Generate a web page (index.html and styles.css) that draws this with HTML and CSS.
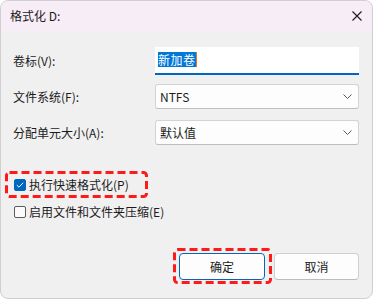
FILE: index.html
```html
<!DOCTYPE html>
<html lang="zh-CN">
<head>
<meta charset="utf-8">
<link rel="stylesheet" href="styles.css">
</head>
<body>
<div class="window">
  <div class="titlebar">
    <span class="title">格式化 D:</span>
    <svg class="close" width="10" height="10" viewBox="0 0 10 10"><path d="M0.5 0.5L9.5 9.5M9.5 0.5L0.5 9.5" stroke="#1a1a1a" stroke-width="1.1" fill="none"/></svg>
  </div>
  <div class="content">
    <div class="row row-1">
      <span class="label">卷标(V):</span>
      <div class="input"><span class="sel">新加卷</span><span class="caret"></span></div>
    </div>
    <div class="row row-2">
      <span class="label">文件系统(F):</span>
      <div class="select"><span>NTFS</span><svg class="chev" width="9" height="5" viewBox="0 0 9 5"><path d="M0.5 0.5L4.5 4.5L8.5 0.5" stroke="#5a5a5a" stroke-width="1" fill="none"/></svg></div>
    </div>
    <div class="row row-3">
      <span class="label">分配单元大小(A):</span>
      <div class="select"><span>默认值</span><svg class="chev" width="9" height="5" viewBox="0 0 9 5"><path d="M0.5 0.5L4.5 4.5L8.5 0.5" stroke="#5a5a5a" stroke-width="1" fill="none"/></svg></div>
    </div>
    <div class="mark-check">
      <svg class="dash" width="143" height="27" viewBox="0 0 143 27"><rect x="1.5" y="1.5" width="140" height="24" rx="3" fill="none" stroke="#ff1a1a" stroke-width="3" stroke-dasharray="8 4"/></svg>
      <div class="check">
        <span class="box checked"><svg width="8" height="6" viewBox="0 0 8 6"><path d="M0.8 3.2L2.9 5.1L7.2 0.8" stroke="#fff" stroke-width="1" fill="none"/></svg></span>
        <span>执行快速格式化(P)</span>
      </div>
    </div>
    <div class="check check-2">
      <span class="box"></span>
      <span>启用文件和文件夹压缩(E)</span>
    </div>
    <div class="buttons">
      <div class="btn-wrap">
        <svg class="dash dash-btn" width="99" height="36" viewBox="0 0 99 36"><rect x="1.5" y="1.5" width="96" height="33" rx="3" fill="none" stroke="#ff1a1a" stroke-width="3" stroke-dasharray="8 4"/></svg>
        <button class="btn primary">确定</button>
      </div>
      <button class="btn">取消</button>
    </div>
  </div>
</div>
</body>
</html>
```
FILE: styles.css
```css
* { box-sizing: border-box; }
html, body { margin: 0; padding: 0; background: #ffffff; }
body {
  font-family: "Noto Sans CJK SC", "Noto Sans", sans-serif;
  font-size: 12px;
  color: #1b1b1b;
}
.window {
  width: 373px;
  height: 299px;
  border: 1px solid #cfcfcf;
  border-radius: 8px;
  background: #f0f0f0;
  overflow: hidden;
}
.titlebar {
  height: 30px;
  background: #f6edf6;
  display: flex;
  align-items: center;
  justify-content: space-between;
  padding: 0 10px 0 9px;
}
.title { font-size: 12px; line-height: 16px; }
.close { display: block; }
.content {
  padding: 16px 12px 0 12px;
}
.row {
  display: flex;
  align-items: center;
}
.label {
  width: 142px;
  line-height: 16px;
}
.row-1 { height: 28px; }
.row-2 { margin-top: 9px; height: 25px; }
.row-3 { margin-top: 11px; height: 25px; }
.input {
  width: 204px;
  height: 28px;
  background: #ffffff;
  border-bottom: 2px solid #0067c0;
  display: flex;
  align-items: center;
  padding-left: 3px;
  padding-bottom: 2px;
}
.sel {
  background: #0078d7;
  color: #ffffff;
  line-height: 15px;
  height: 15px;
  letter-spacing: 0.5px;
}
.caret {
  width: 1px;
  height: 15px;
  background: #e07a20;
}
.select {
  width: 204px;
  height: 25px;
  background: #fdfdfd;
  border: 1px solid #d3d3d3;
  border-bottom-color: #bdbdbd;
  border-radius: 3px;
  display: flex;
  align-items: center;
  justify-content: space-between;
  padding: 0 6px 0 4px;
}
.chev { display: block; }
.dash {
  position: absolute;
  left: 0;
  top: 0;
  display: block;
}
.mark-check {
  position: relative;
  margin-top: 26px;
  margin-left: -8px;
  width: 143px;
  height: 27px;
  display: flex;
  align-items: center;
  padding-left: 9px;
}
.check {
  display: flex;
  align-items: center;
  gap: 3px;
  line-height: 18px;
}
.check-2 { margin-top: 5px; margin-left: 1px; }
.box {
  width: 12px;
  height: 12px;
  border: 1px solid #5c5c5c;
  border-radius: 2px;
  background: #fbfbfb;
  display: flex;
  align-items: center;
  justify-content: center;
}
.box.checked {
  background: #0067c0;
  border-color: #0067c0;
}
.box svg { display: block; }
.buttons {
  margin-top: 32px;
  display: flex;
  justify-content: flex-end;
  gap: 9px;
  padding-right: 1px;
}
.btn-wrap { position: relative; }
.dash-btn {
  left: -6px;
  top: -5px;
}
.btn {
  font-family: inherit;
  font-size: 12px;
  color: #1b1b1b;
  width: 85px;
  height: 27px;
  background: #fdfdfd;
  border: 1px solid #d0d0d0;
  border-bottom-color: #bcbcbc;
  border-radius: 4px;
  padding: 0;
  display: block;
}
.btn.primary {
  width: 86px;
  border: 1px solid #0067c0;
  box-shadow: inset 0 0 0 1px #ffffff;
}
```
